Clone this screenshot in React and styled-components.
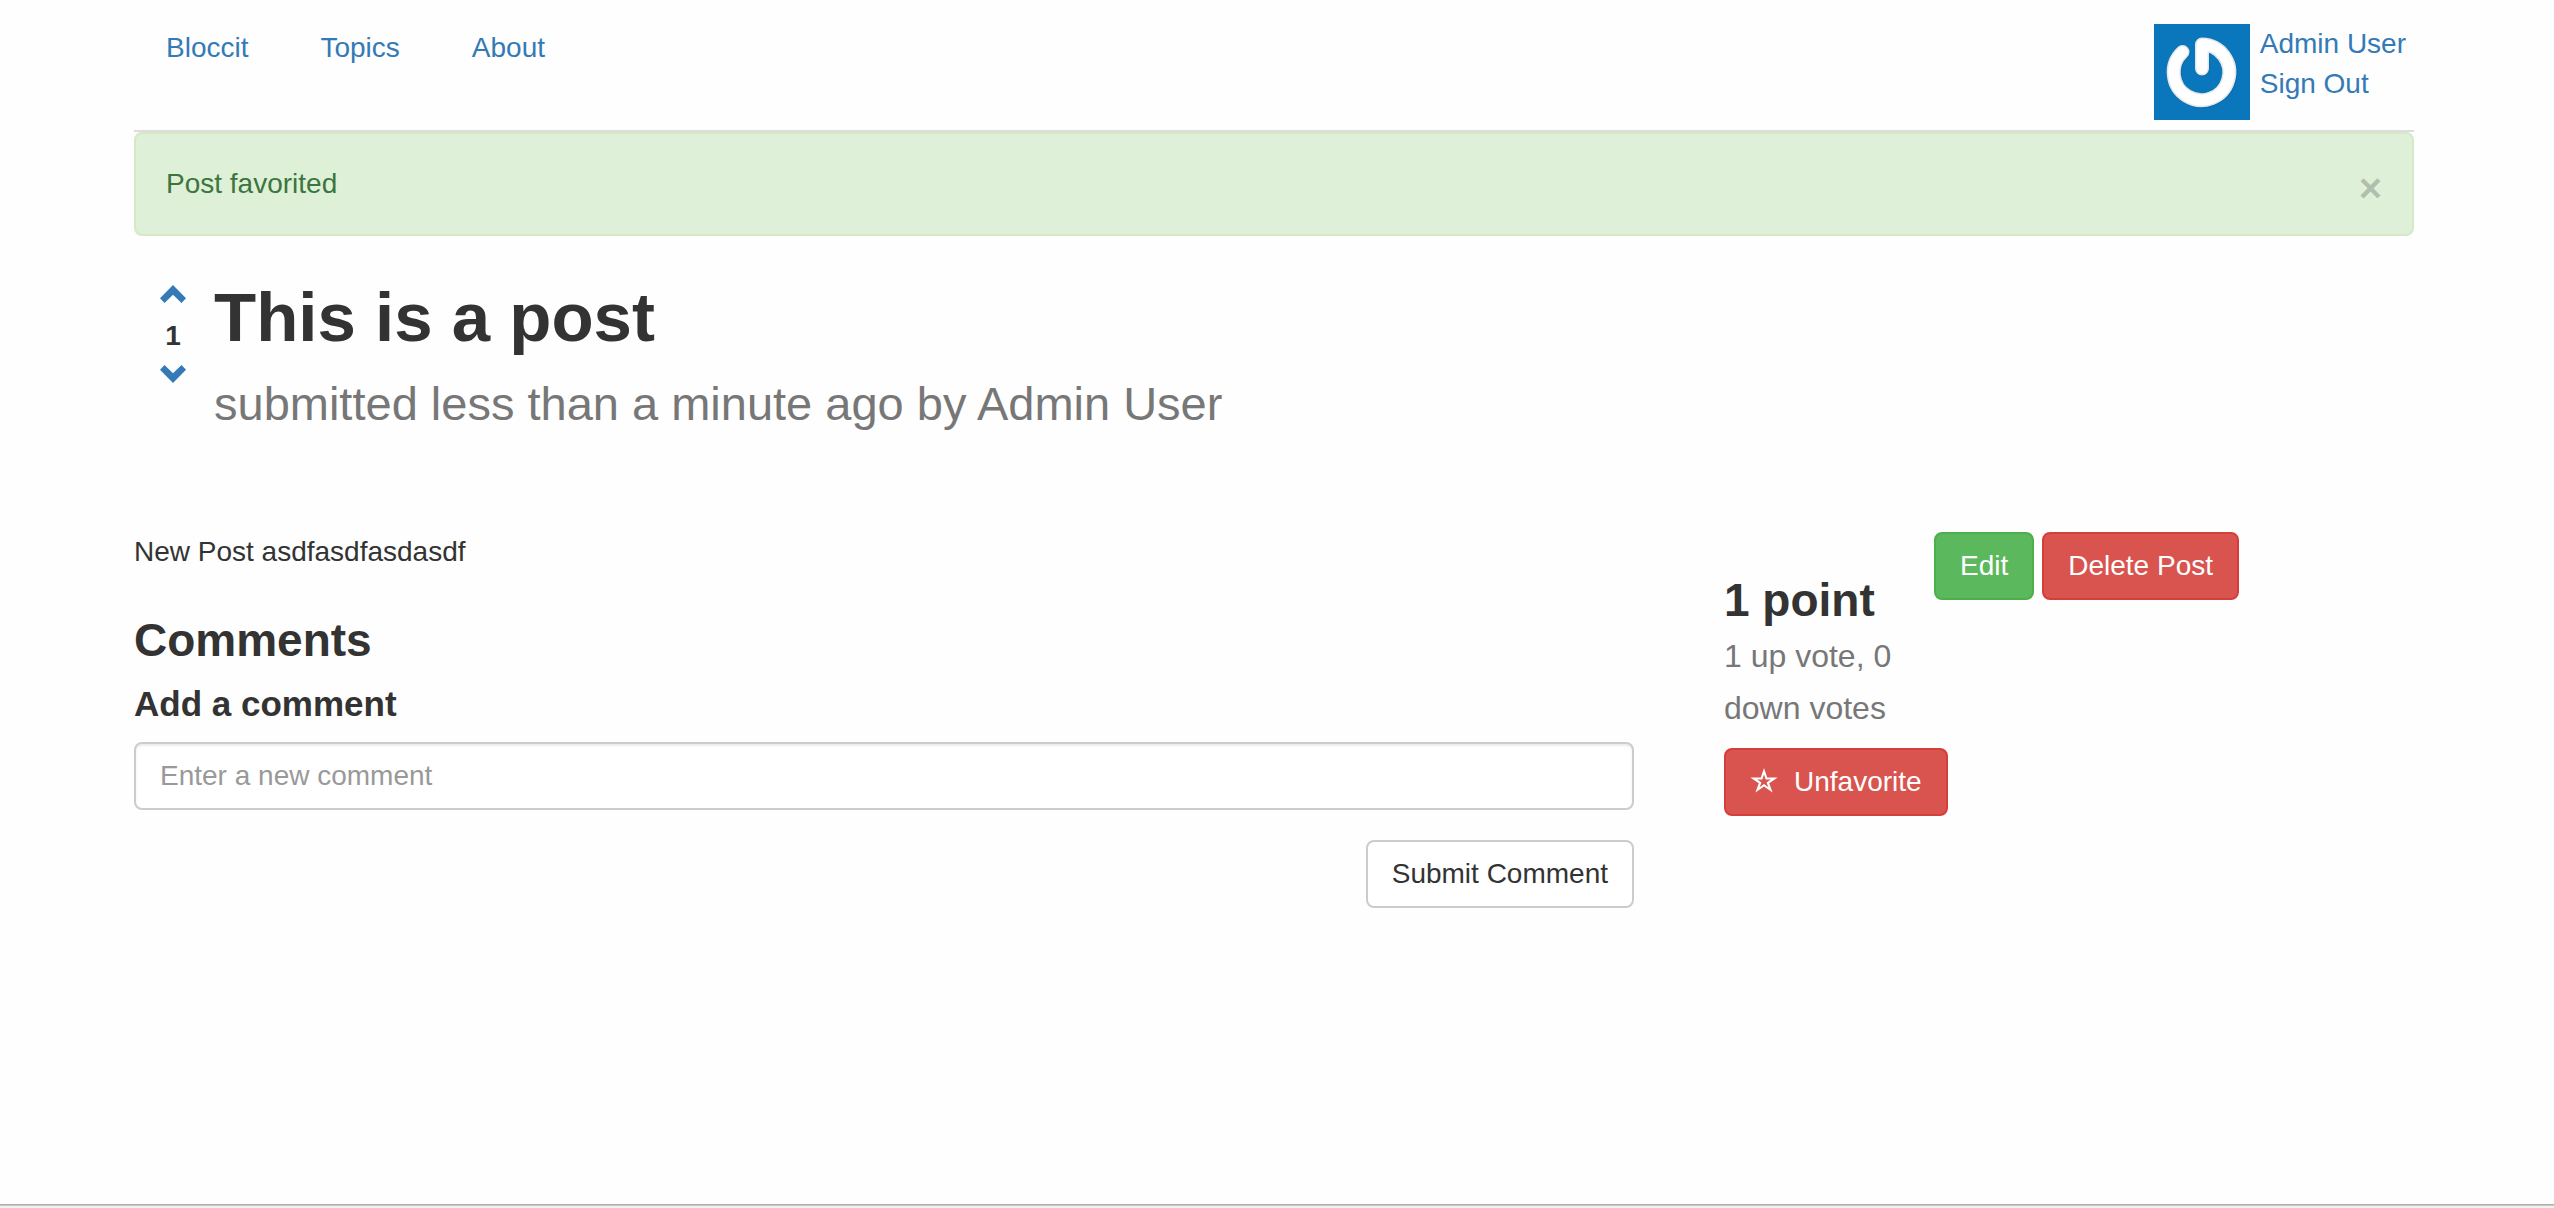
import React from "react";
import styled, { createGlobalStyle } from "styled-components";

const GlobalStyle = createGlobalStyle`
  *, *::before, *::after { box-sizing: border-box; }
  body {
    margin: 0;
    background: #fefefe;
    color: #333;
    font-family: "Liberation Sans", Arial, sans-serif;
    font-size: 28px;
    line-height: 40px;
  }
  h1, h2, h3, p { margin: 0; }
  button, input { font: inherit; }
`;

const Page = styled.div`
  min-height: 100vh;
  display: flex;
  flex-direction: column;
`;

const Container = styled.div`
  flex: 1;
  padding: 0 140px 0 134px;
`;

const Header = styled.header`
  display: flex;
  justify-content: space-between;
  padding: 24px 8px 10px 32px;
  border-bottom: 2px solid #ddd;
`;

const Nav = styled.nav`
  display: flex;
  align-items: flex-start;
  gap: 72px;
  padding-top: 4px;
`;

const Link = styled.a`
  color: #337ab7;
  text-decoration: none;
`;

const UserInfo = styled.div`
  display: flex;
  gap: 10px;
`;

const UserLinks = styled.div`
  display: flex;
  flex-direction: column;
`;

const AvatarImage = styled.svg`
  display: block;
  width: 96px;
  height: 96px;
`;

const Alert = styled.div`
  display: flex;
  justify-content: space-between;
  align-items: flex-start;
  padding: 30px;
  border: 2px solid #d6e9c6;
  border-radius: 8px;
  background: #dff0d8;
  color: #3c763d;
`;

const CloseButton = styled.button`
  padding: 0;
  border: 0;
  background: none;
  height: 40px;
  font-size: 40px;
  font-weight: 700;
  line-height: 48px;
  color: #000;
  text-shadow: 0 2px 0 #fff;
  opacity: 0.2;
  cursor: pointer;
`;

const PostHeader = styled.section`
  display: flex;
  gap: 28px;
  padding: 40px 0 0 26px;
`;

const Votes = styled.div`
  display: flex;
  flex-direction: column;
  align-items: center;
  width: 26px;
  font-weight: 700;
`;

const VoteLink = styled.a`
  display: flex;
  align-items: center;
  height: 40px;
  padding-bottom: 4px;
  color: #337ab7;
`;

const Title = styled.h1`
  font-size: 69px;
  font-weight: 700;
  line-height: 84px;
`;

const Byline = styled.p`
  font-size: 47px;
  line-height: 88px;
  color: #777;
`;

const Columns = styled.div`
  display: grid;
  grid-template-columns: 1500px 150px 1fr;
  column-gap: 60px;
  align-items: start;
  margin-top: 84px;

  @media (max-width: 2100px) {
    grid-template-columns: 1fr 224px;
    row-gap: 40px;
  }
`;

const SectionTitle = styled.h2`
  font-size: 46px;
  line-height: 52px;
  white-space: nowrap;
`;

const FormTitle = styled.label`
  display: block;
  margin-top: 18px;
  font-size: 35px;
  font-weight: 700;
  line-height: 40px;
`;

const Comments = styled.section`
  padding-top: 42px;
`;

const CommentForm = styled.form`
  display: flex;
  flex-direction: column;
  align-items: flex-end;
  gap: 30px;
  margin-top: 18px;
`;

const CommentInput = styled.input`
  width: 100%;
  height: 68px;
  padding: 12px 24px;
  border: 2px solid #ccc;
  border-radius: 8px;
  background: #fff;
  box-shadow: inset 0 2px 2px rgba(0, 0, 0, 0.075);
  color: #555;

  &::placeholder {
    color: #999;
    opacity: 1;
  }
`;

const tones = {
  plain: "color: #333; background: #fff; border-color: #ccc;",
  success: "color: #fff; background: #5cb85c; border-color: #4cae4c;",
  danger: "color: #fff; background: #d9534f; border-color: #d43f3a;",
};

const Button = styled.button`
  display: inline-flex;
  align-items: center;
  gap: 16px;
  padding: 12px 24px;
  border: 2px solid;
  border-radius: 8px;
  white-space: nowrap;
  cursor: pointer;
  ${(p) => tones[p.$tone]}
`;

const Score = styled.aside`
  padding-top: 42px;
  margin-left: 30px;
`;

const ScoreDetail = styled.p`
  width: 180px;
  margin: 4px 0 14px;
  font-size: 32px;
  line-height: 52px;
  color: #777;
`;

const Actions = styled.div`
  display: flex;
  gap: 8px;
  margin-left: 30px;
`;

const Footer = styled.footer`
  height: 4px;
  border-top: 1px solid #b0b0b0;
  background: #f0f0f0;
  box-shadow: inset 0 1px 0 #c8c8c8;
`;

function Avatar() {
  return (
    <AvatarImage viewBox="0 0 96 96" role="img" aria-label="Avatar">
      <rect width="96" height="96" fill="#0a76bb" />
      <g fill="none" strokeLinecap="round" strokeLinejoin="round">
        <g stroke="#085f98" strokeWidth="14" opacity="0.35" transform="translate(1 1)">
          <path d="M28.5 28A27.8 27.8 0 1 0 48 20.5V44.5" />
        </g>
        <path d="M28.5 28A27.8 27.8 0 1 0 48 20.5V44.5" stroke="#e3e7ea" strokeWidth="14" />
        <path d="M28.5 28A27.8 27.8 0 1 0 48 20.5V44.5" stroke="#fff" strokeWidth="11" />
      </g>
    </AvatarImage>
  );
}

function Chevron({ down }) {
  return (
    <svg width="26" height="18" viewBox="0 0 26 18" fill="currentColor" aria-hidden="true">
      <path d={down ? "M4.5 0L13 8.2L21.5 0L26 4.8L13 18L0 4.8Z" : "M13 0L26 13.2L21.5 18L13 9.8L4.5 18L0 13.2Z"} />
    </svg>
  );
}

function Star() {
  return (
    <svg width="28" height="28" viewBox="0 0 28 28" fill="currentColor" fillRule="evenodd" aria-hidden="true">
      <path d="M14 0L17.2 9.4H27.7L19.2 15.2L22.6 24.6L14 18.6L5.4 24.6L8.8 15.2L0.3 9.4H10.8ZM14 6.4L12.3 11.5H7.2L11.4 14.4L9.6 19.2L14 16.1L18.4 19.2L16.6 14.4L20.8 11.5H15.7Z" />
    </svg>
  );
}

export default function App() {
  return (
    <>
      <GlobalStyle />
      <Page>
        <Container>
          <Header>
            <Nav>
              <Link href="#home">Bloccit</Link>
              <Link href="#topics">Topics</Link>
              <Link href="#about">About</Link>
            </Nav>
            <UserInfo>
              <Avatar />
              <UserLinks>
                <Link href="#profile">Admin User</Link>
                <Link href="#sign-out">Sign Out</Link>
              </UserLinks>
            </UserInfo>
          </Header>
          <Alert role="status">
            <span>Post favorited</span>
            <CloseButton type="button" aria-label="Close">×</CloseButton>
          </Alert>
          <main>
            <PostHeader>
              <Votes>
                <VoteLink href="#up" aria-label="Vote up"><Chevron /></VoteLink>
                <span>1</span>
                <VoteLink href="#down" aria-label="Vote down"><Chevron down /></VoteLink>
              </Votes>
              <div>
                <Title>This is a post</Title>
                <Byline>submitted less than a minute ago by Admin User</Byline>
              </div>
            </PostHeader>
            <Columns>
              <div>
                <p>New Post asdfasdfasdasdf</p>
                <Comments>
                  <SectionTitle>Comments</SectionTitle>
                  <FormTitle htmlFor="comment">Add a comment</FormTitle>
                  <CommentForm onSubmit={(e) => e.preventDefault()}>
                    <CommentInput id="comment" type="text" placeholder="Enter a new comment" />
                    <Button type="submit" $tone="plain">Submit Comment</Button>
                  </CommentForm>
                </Comments>
              </div>
              <Score>
                <SectionTitle>1 point</SectionTitle>
                <ScoreDetail>1 up vote, 0 down votes</ScoreDetail>
                <Button type="button" $tone="danger"><Star />Unfavorite</Button>
              </Score>
              <Actions>
                <Button type="button" $tone="success">Edit</Button>
                <Button type="button" $tone="danger">Delete Post</Button>
              </Actions>
            </Columns>
          </main>
        </Container>
        <Footer />
      </Page>
    </>
  );
}
